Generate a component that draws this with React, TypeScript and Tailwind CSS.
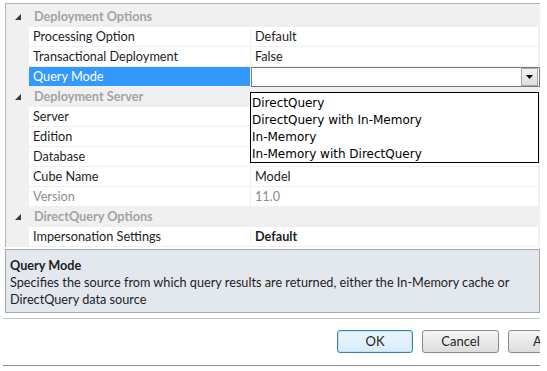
import React from 'react'

type Row =
  | { kind: 'cat'; label: string }
  | { kind: 'prop'; label: string; value?: string; muted?: boolean; bold?: boolean; selected?: boolean }

const rows: Row[] = [
  { kind: 'cat', label: 'Deployment Options' },
  { kind: 'prop', label: 'Processing Option', value: 'Default' },
  { kind: 'prop', label: 'Transactional Deployment', value: 'False' },
  { kind: 'prop', label: 'Query Mode', selected: true },
  { kind: 'cat', label: 'Deployment Server' },
  { kind: 'prop', label: 'Server' },
  { kind: 'prop', label: 'Edition' },
  { kind: 'prop', label: 'Database' },
  { kind: 'prop', label: 'Cube Name', value: 'Model' },
  { kind: 'prop', label: 'Version', value: '11.0', muted: true },
  { kind: 'cat', label: 'DirectQuery Options' },
  { kind: 'prop', label: 'Impersonation Settings', value: 'Default', bold: true },
]

const options = ['DirectQuery', 'DirectQuery with In-Memory', 'In-Memory', 'In-Memory with DirectQuery']

function Collapse() {
  return (
    <svg width="6" height="6" viewBox="0 0 6 6" className="block">
      <polygon points="6,0 6,6 0,6" fill="#3a3a3a" />
    </svg>
  )
}

function ComboBox() {
  return (
    <div className="flex h-[20px] flex-1 items-center border border-[#7a7a7a] bg-white pr-[1px]">
      <div className="flex-1" />
      <div className="flex h-[18px] w-[17px] items-center justify-center border border-[#a8a8a8] bg-gradient-to-b from-[#f4f4f4] to-[#dedede]">
        <svg width="7" height="4" viewBox="0 0 7 4">
          <polygon points="0,0 7,0 3.5,4" fill="#000" />
        </svg>
      </div>
    </div>
  )
}

export default function App() {
  return (
    <div className="relative h-[371px] w-[547px] overflow-hidden bg-white font-['Lato',sans-serif] text-[12.7px] text-[#1e1e1e]">
      <div className="ml-[5px] mr-[7px] pt-[3px]">
        {/* property grid */}
        <div className="border-t border-l border-[#b4b4b4] bg-[#f0f0f0] pt-[3px]">
          {rows.map((r, i) =>
            r.kind === 'cat' ? (
              <div key={i} className="flex h-[20px] items-center bg-[#f0f0f0]">
                <div className="flex w-[23px] justify-end pr-[8px]">
                  <Collapse />
                </div>
                <span className="pl-[5px] font-bold text-[#a3a3a3]">{r.label}</span>
              </div>
            ) : (
              <div key={i} className="flex h-[20px]">
                <div className="w-[23px]" />
                <div
                  className={`flex w-[221px] items-center border-b border-[#f0f0f0] pl-[4px] ${
                    r.selected ? 'bg-[#3399ff] text-white' : 'bg-white'
                  } ${r.muted ? 'text-[#8c8c8c]' : ''}`}
                >
                  {r.label}
                </div>
                <div className="w-[1px] bg-[#f0f0f0]" />
                {r.selected ? (
                  <ComboBox />
                ) : (
                  <div
                    className={`mr-[2px] flex flex-1 items-center border-b border-[#f0f0f0] bg-white pl-[4px] ${
                      r.muted ? 'text-[#8c8c8c]' : ''
                    } ${r.bold ? 'font-bold' : ''}`}
                  >
                    {r.value}
                  </div>
                )}
              </div>
            )
          )}
        </div>

        {/* description */}
        <div className="mt-[2px] h-[64px] border border-[#a8a8a8] bg-[#e3e7ee] px-[4px] pt-[7px] leading-[17px]">
          <div className="font-bold">Query Mode</div>
          <div>Specifies the source from which query results are returned, either the In-Memory cache or</div>
          <div>DirectQuery data source</div>
        </div>
      </div>

      <div className="ml-[3px] mr-[7px] mt-[5px] border-t border-[#c8c8c8]" />

      {/* buttons */}
      <div className="mr-[7px] mt-[11px] flex justify-end gap-[9px]">
        <button className="h-[23px] w-[76px] rounded-[3px] border border-[#3c7fb1] bg-gradient-to-b from-[#eaf5fc] to-[#d9ecf8] text-[13px] text-[#1e1e1e] shadow-[inset_0_0_0_1px_#bfe3f6]">
          OK
        </button>
        <button className="h-[23px] w-[77px] rounded-[3px] border border-[#8a8a8a] bg-gradient-to-b from-[#f6f6f6] to-[#dddddd] text-[13px] text-[#1e1e1e]">
          Cancel
        </button>
        <div className="h-[23px] w-[32px] overflow-hidden">
          <button className="h-[23px] w-[77px] rounded-[3px] border border-[#8a8a8a] bg-gradient-to-b from-[#f6f6f6] to-[#dddddd] pl-[24px] text-left text-[13px] text-[#1e1e1e]">
            Apply
          </button>
        </div>
      </div>
      <div className="ml-[3px] mr-[7px] mt-[12px] border-t border-[#8a8a8a]" />

      {/* open dropdown list */}
      <div className="absolute left-[250px] top-[92px] h-[71px] w-[289px] border border-black bg-white pl-[1px] pt-[2px] font-['DejaVu_Sans',sans-serif] text-[12px] leading-[17px] text-black">
        {options.map((o) => (
          <div key={o}>{o}</div>
        ))}
      </div>
    </div>
  )
}
